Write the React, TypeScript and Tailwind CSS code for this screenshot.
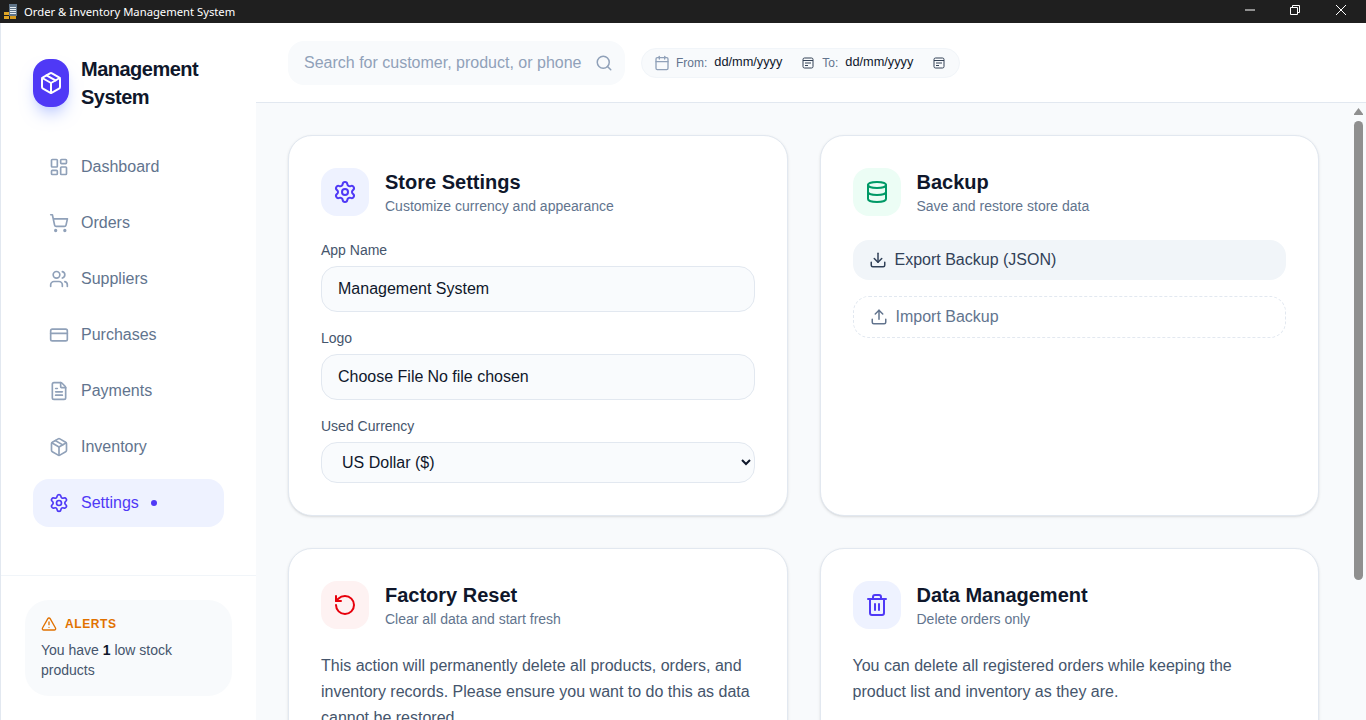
import { CreditCard, Database, Download, FileText, LayoutDashboard, Package, Calendar, RotateCcw, Search, Settings, ShoppingCart, Trash2, TriangleAlert, Upload, Users } from 'lucide-react';
import type { ReactNode } from 'react';

const navItems = [
  { icon: LayoutDashboard, label: 'Dashboard' },
  { icon: ShoppingCart, label: 'Orders' },
  { icon: Users, label: 'Suppliers' },
  { icon: CreditCard, label: 'Purchases' },
  { icon: FileText, label: 'Payments' },
  { icon: Package, label: 'Inventory' },
];

function TitleBar() {
  return (
    <div className="flex h-[23px] shrink-0 items-center bg-[#1f1f1f] text-white">
      <svg className="ml-[3px] h-4 w-4" viewBox="0 0 16 16">
        <rect x="6" y="0" width="8" height="12" fill="#5f7488" />
        <rect x="7" y="3" width="6" height="1" fill="#e8eef2" />
        <rect x="7" y="5" width="6" height="1" fill="#e8eef2" />
        <rect x="7" y="7" width="6" height="1" fill="#e8eef2" />
        <rect x="7" y="9" width="6" height="1" fill="#e8eef2" />
        <rect x="1" y="8" width="5" height="3" fill="#e0a526" />
        <rect x="1" y="12" width="5" height="3" fill="#e0a526" />
        <rect x="7" y="12" width="6" height="3" fill="#d69a1e" />
      </svg>
      <span className="mt-px ml-[5px] font-['Noto_Sans',sans-serif] text-[11.25px]">Order &amp; Inventory Management System</span>
      <div className="mb-[3px] ml-auto flex items-center">
        <svg className="mr-[35px] h-2.5 w-2.5" viewBox="0 0 10 10"><path d="M0 5h10" stroke="white" /></svg>
        <svg className="mr-9 h-2.5 w-2.5" viewBox="0 0 10 10" fill="none" stroke="white"><path d="M.5 2.500h7v7h-7z" /><path d="M2.500 2.500v-2h7v7h-2" /></svg>
        <svg className="mr-5 h-2.5 w-2.5" viewBox="0 0 10 10" stroke="white"><path d="M0 0l10 10M10 0L0 10" /></svg>
      </div>
    </div>
  );
}

function Sidebar() {
  return (
    <aside className="flex w-64 shrink-0 flex-col border-l border-slate-200 bg-white">
      <div className="flex items-center gap-3 pt-[32px] pl-8">
        <div className="flex h-12 w-9 items-center justify-center rounded-2xl bg-indigo-600 shadow-lg shadow-indigo-200">
          <Package className="h-6 w-6 text-white" strokeWidth={2} />
        </div>
        <div className="w-32 text-xl leading-7 font-bold tracking-tight text-slate-900">Management System</div>
      </div>
      <nav className="mt-[32px] flex flex-col gap-2 pr-8 pl-8">
        {navItems.map((item) => (
          <div key={item.label} className="flex h-12 items-center gap-3 rounded-2xl px-4 text-slate-500">
            <item.icon className="h-5 w-5 text-slate-400" strokeWidth={2} />
            <span>{item.label}</span>
          </div>
        ))}
        <div className="flex h-12 items-center gap-3 rounded-2xl bg-indigo-50 px-4 text-indigo-600">
          <Settings className="h-5 w-5" strokeWidth={2} />
          <span>Settings</span>
          <span className="h-1.5 w-1.5 rounded-full bg-indigo-600" />
        </div>
      </nav>
      <div className="mt-12 border-t border-slate-100 px-6 pt-6">
        <div className="h-24 w-[207px] rounded-3xl bg-slate-50 px-4 pt-4">
          <div className="flex items-center gap-2 text-amber-600">
            <TriangleAlert className="h-4 w-4" strokeWidth={2} />
            <span className="text-xs font-bold tracking-wider">ALERTS</span>
          </div>
          <p className="mt-2 text-sm leading-5 text-slate-600">
            You have <b className="text-slate-900">1</b> low stock products
          </p>
        </div>
      </div>
    </aside>
  );
}

function DateIcon() {
  return (
    <svg className="h-3 w-3 shrink-0" viewBox="0 0 12 12" fill="none" stroke="#334155">
      <rect x="1" y="1" width="10" height="10" rx="1.500" />
      <path d="M1 3.500h10" />
      <path d="M3 6h6M3 8.500h3" />
    </svg>
  );
}

function TopBar() {
  return (
    <header className="flex h-20 shrink-0 items-center border-b border-slate-200 bg-white pl-8">
      <div className="flex h-11 w-[337px] items-center justify-between rounded-2xl bg-slate-50 pr-3 pl-4">
        <input
          className="w-[290px] bg-transparent text-base text-slate-900 outline-none placeholder:text-slate-400"
          placeholder="Search for customer, product, or phone"
        />
        <Search className="h-4.5 w-4.5 text-slate-400" strokeWidth={2} />
      </div>
      <div className="ml-4 flex h-[30px] w-[319px] items-center rounded-2xl border border-slate-100 bg-slate-50 pl-3 text-xs">
        <Calendar className="h-4 w-4 text-slate-400" strokeWidth={2} />
        <span className="ml-1.5 text-slate-500">From:</span>
        <span className="ml-[7px] w-[88px] text-[12.75px] text-slate-900">dd/mm/yyyy</span>
        <DateIcon />
        <span className="ml-2 text-slate-500">To:</span>
        <span className="ml-[7px] w-[88px] text-[12.75px] text-slate-900">dd/mm/yyyy</span>
        <DateIcon />
      </div>
    </header>
  );
}

function Card({ icon, iconBox, title, subtitle, children, className }: { icon: ReactNode; iconBox: string; title: string; subtitle: string; children: ReactNode; className?: string }) {
  return (
    <section className={`rounded-3xl border border-slate-200 bg-white p-8 shadow-sm ${className ?? ''}`}>
      <div className="flex items-center gap-4">
        <div className={`flex h-12 w-12 items-center justify-center rounded-2xl ${iconBox}`}>{icon}</div>
        <div>
          <h2 className="text-xl leading-7 font-bold text-slate-900">{title}</h2>
          <p className="text-sm leading-5 text-slate-500">{subtitle}</p>
        </div>
      </div>
      {children}
    </section>
  );
}

function Scrollbar() {
  return (
    <div className="flex w-[15px] shrink-0 flex-col items-center bg-slate-50 pt-[5px]">
      <svg className="h-[7px] w-[9px]" viewBox="0 0 9 7"><path d="M4.500 0L9 6v1H0V6z" fill="#8f8f8f" /></svg>
      <div className="mt-[6px] h-[459px] w-[9px] rounded-full bg-[#8f8f8f]" />
    </div>
  );
}

const fieldClass = 'h-[46px] w-full rounded-2xl border border-slate-200 bg-[#f9fbfd] px-4 text-base text-slate-900';

export default function App() {
  return (
    <div className="flex h-[720px] w-[1366px] flex-col overflow-hidden bg-white font-['Liberation_Sans',Arial,sans-serif]">
      <TitleBar />
      <div className="flex min-h-0 flex-1">
        <Sidebar />
        <div className="flex min-w-0 flex-1 flex-col">
          <TopBar />
          <div className="flex min-h-0 flex-1 bg-slate-50">
            <main className="grid flex-1 grid-cols-2 content-start gap-8 overflow-hidden p-8">
              <Card
                className="h-[381px]"
                iconBox="bg-indigo-50"
                icon={<Settings className="h-6 w-6 text-indigo-600" strokeWidth={2} />}
                title="Store Settings"
                subtitle="Customize currency and appearance"
              >
                <label className="mt-6 mb-1.5 block text-sm leading-5 text-slate-600">App Name</label>
                <input className={fieldClass} defaultValue="Management System" />
                <label className="mt-4 mb-1.5 block text-sm leading-5 text-slate-600">Logo</label>
                <input type="file" className={`${fieldClass} leading-[44px]`} />
                <label className="mt-4 mb-1.5 block text-sm leading-5 text-slate-600">Used Currency</label>
                <select className="h-[41px] w-full rounded-2xl border border-slate-200 bg-[#f9fbfd] px-4 text-base text-slate-900">
                  <option>US Dollar ($)</option>
                </select>
              </Card>
              <Card
                className="h-[381px]"
                iconBox="bg-emerald-50"
                icon={<Database className="h-6 w-6 text-emerald-600" strokeWidth={2} />}
                title="Backup"
                subtitle="Save and restore store data"
              >
                <button className="mt-6 flex h-10 w-full items-center gap-2 rounded-2xl bg-slate-100 px-4 text-slate-700">
                  <Download className="h-[18px] w-[18px]" strokeWidth={2} />
                  Export Backup (JSON)
                </button>
                <button className="mt-4 flex h-[42px] w-full items-center gap-2 rounded-2xl border border-dashed border-slate-200 px-4 text-slate-500">
                  <Upload className="h-[18px] w-[18px]" strokeWidth={2} />
                  Import Backup
                </button>
              </Card>
              <Card
                iconBox="bg-red-50"
                icon={<RotateCcw className="h-6 w-6 text-red-600" strokeWidth={2} />}
                title="Factory Reset"
                subtitle="Clear all data and start fresh"
              >
                <p className="mt-6 leading-[26px] text-slate-600">
                  This action will permanently delete all products, orders, and inventory records. Please ensure you want to do this as data cannot be restored.
                </p>
              </Card>
              <Card
                iconBox="bg-indigo-50"
                icon={<Trash2 className="h-6 w-6 text-indigo-600" strokeWidth={2} />}
                title="Data Management"
                subtitle="Delete orders only"
              >
                <p className="mt-6 leading-[26px] text-slate-600">
                  You can delete all registered orders while keeping the product list and inventory as they are.
                </p>
              </Card>
            </main>
            <Scrollbar />
          </div>
        </div>
      </div>
    </div>
  );
}
